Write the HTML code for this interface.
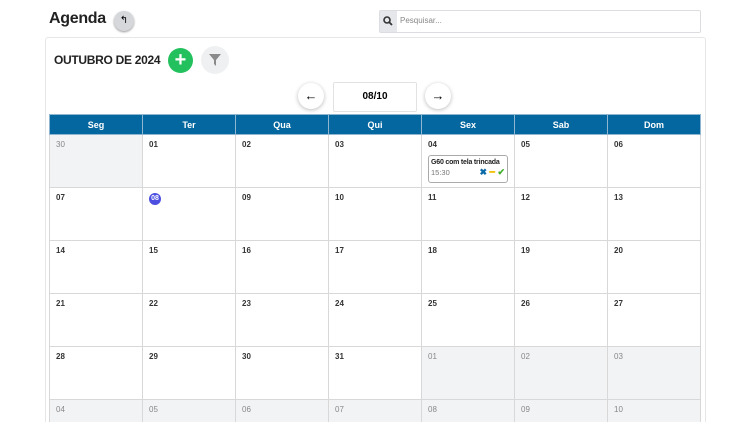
<!DOCTYPE html><html><head><style>
html,body{margin:0;width:750px;height:422px;overflow:hidden;background:#fff;font-family:"Liberation Sans",sans-serif;position:relative}
.a{position:absolute}
table{border-collapse:collapse;table-layout:fixed;position:absolute;left:49px;top:114px;width:652px}
th{background:#05679f;color:#fff;font-size:9px;height:19px;border:1px solid #8fb6d0;padding:0}
td{height:53px;border:1px solid #d8d8d8;vertical-align:top;font-size:8px;font-weight:bold;color:#333;padding:5px 6px;box-sizing:border-box}
td.g{background:#f2f3f5;color:#888;font-weight:normal}
</style></head><body>
<div class="a" style="left:49px;top:10px;font-size:16px;font-weight:bold;color:#222;letter-spacing:-0.3px">Agenda</div>
<div class="a" style="left:114px;top:11px;width:20px;height:20px;border-radius:50%;background:#d5d7db;box-shadow:0 1px 2px #999;text-align:center;font-size:10px;line-height:20px">↰</div>
<div class="a" style="left:379px;top:10px;width:320px;height:21px;border:1px solid #dcdde0;border-radius:2px"></div>
<div class="a" style="left:380px;top:11px;width:17px;height:21px;background:#e5e7ea"></div>
<svg class="a" style="left:383px;top:16px" width="10" height="10"><circle cx="4" cy="4" r="3" fill="none" stroke="#333" stroke-width="1.6"/><path d="M6 6l3 3" stroke="#333" stroke-width="1.8"/></svg>
<div class="a" style="left:400px;top:16px;font-size:8px;color:#888">Pesquisar...</div>
<div class="a" style="left:45px;top:37px;width:659px;height:400px;border:1px solid #e6e6e6;border-radius:3px"></div>
<div class="a" style="left:54px;top:53px;font-size:12px;font-weight:bold;color:#222;letter-spacing:-0.3px">OUTUBRO DE 2024</div>
<div class="a" style="left:168px;top:48px;width:25px;height:25px;border-radius:50%;background:#22c15e;color:#fff;text-align:center;line-height:25px;font-size:20px;font-weight:bold">+</div>
<div class="a" style="left:201px;top:46px;width:28px;height:28px;border-radius:50%;background:#eef0f2"></div>
<svg class="a" style="left:209px;top:54px" width="12" height="12"><path d="M0 0h12L7 6v6L5 10V6z" fill="#8a8a8a"/></svg>
<div class="a" style="left:298px;top:83px;width:26px;height:26px;border-radius:50%;background:#fff;box-shadow:0 1px 4px #bbb;text-align:center;line-height:26px;font-size:13px;font-weight:bold">←</div>
<div class="a" style="left:333px;top:82px;width:82px;height:28px;border:1px solid #e2e2e2;border-radius:2px;text-align:center;line-height:28px;font-size:10px;font-weight:bold">08/10</div>
<div class="a" style="left:425px;top:83px;width:26px;height:26px;border-radius:50%;background:#fff;box-shadow:0 1px 4px #bbb;text-align:center;line-height:26px;font-size:13px;font-weight:bold">→</div>
<table>
<tr><th>Seg</th><th>Ter</th><th>Qua</th><th>Qui</th><th>Sex</th><th>Sab</th><th>Dom</th></tr>
<tr><td class="g">30</td><td>01</td><td>02</td><td>03</td><td style="position:relative">04
<div style="position:absolute;left:6px;top:20px;width:80px;height:28px;border:1px solid #aaa;border-radius:3px;box-sizing:border-box;padding:3px 2px;white-space:nowrap">
<div style="font-size:7px;color:#222;letter-spacing:-0.2px">G60 com tela trincada</div>
<div style="font-size:7.5px;color:#777;font-weight:normal;margin-top:2px">15:30 <span style="float:right;font-weight:bold;font-size:9px;line-height:8px"><span style="color:#0b6aa8">✖</span> <span style="color:#f2c20c">━</span> <span style="color:#3fae2a">✔</span></span></div></div></td><td>05</td><td>06</td></tr>
<tr><td>07</td><td><span style="display:inline-block;background:#4c4fe0;color:#fff;border-radius:50%;width:12px;height:12px;text-align:center;line-height:12px;font-size:7px">08</span></td><td>09</td><td>10</td><td>11</td><td>12</td><td>13</td></tr>
<tr><td>14</td><td>15</td><td>16</td><td>17</td><td>18</td><td>19</td><td>20</td></tr>
<tr><td>21</td><td>22</td><td>23</td><td>24</td><td>25</td><td>26</td><td>27</td></tr>
<tr><td>28</td><td>29</td><td>30</td><td>31</td><td class="g">01</td><td class="g">02</td><td class="g">03</td></tr>
<tr><td class="g">04</td><td class="g">05</td><td class="g">06</td><td class="g">07</td><td class="g">08</td><td class="g">09</td><td class="g">10</td></tr>
</table>
</body></html>
